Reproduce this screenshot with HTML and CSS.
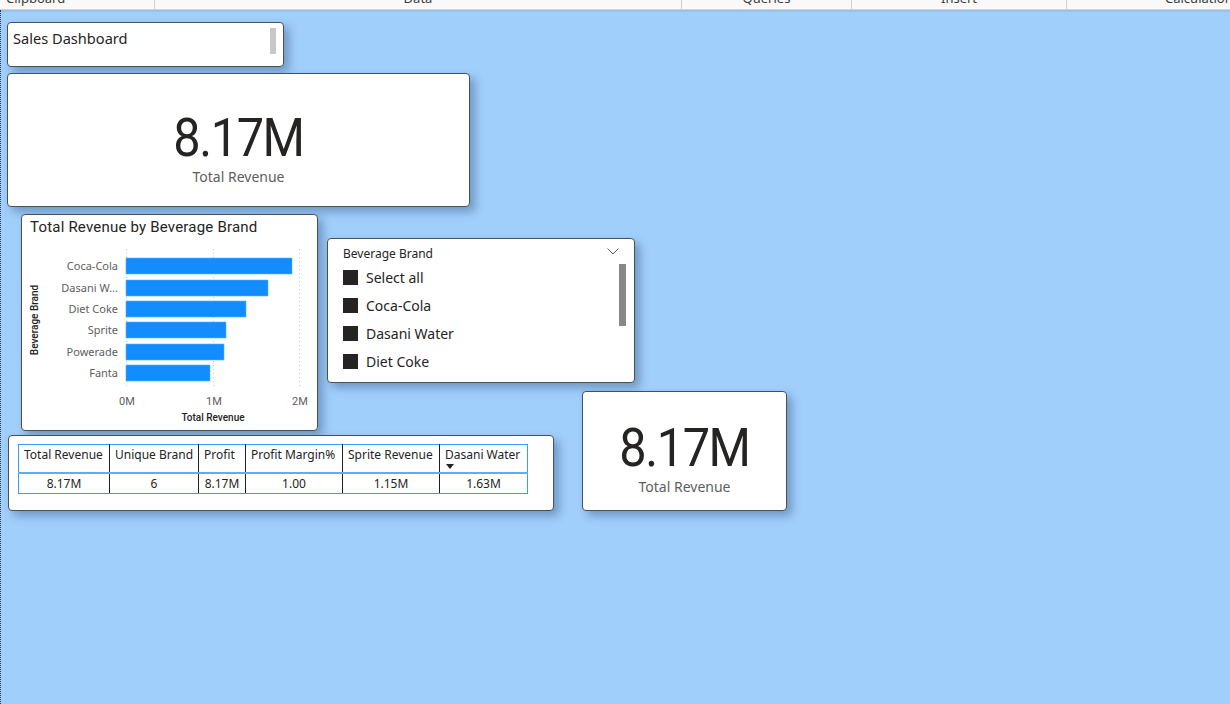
FILE: index.html
```html
<!DOCTYPE html>
<html>
<head>
<meta charset="utf-8">
<link rel="stylesheet" href="styles.css">
</head>
<body>
<div class="ribbon">
  <div class="group g-clip"><span>Clipboard</span></div>
  <div class="group g-data"><span>Data</span></div>
  <div class="group g-queries"><span>Queries</span></div>
  <div class="group g-insert"><span>Insert</span></div>
  <div class="group g-calc"><span>Calculations</span></div>
</div>
<div class="canvas">
  <div class="visual textbox">
    <div class="tb-text">Sales Dashboard</div>
    <div class="tb-scroll"></div>
  </div>

  <div class="visual card card-big">
    <div class="card-value">8.17M</div>
    <div class="card-label">Total Revenue</div>
  </div>

  <div class="visual chart">
    <div class="chart-title">Total Revenue by Beverage Brand</div>
    <svg class="chart-svg" width="294" height="193" viewBox="0 0 294 193">
      <g class="grid">
        <line x1="104.5" y1="12" x2="104.5" y2="150"/>
        <line x1="191.5" y1="12" x2="191.5" y2="150"/>
        <line x1="277.5" y1="12" x2="277.5" y2="150"/>
      </g>
      <g class="bars">
        <rect x="104" y="21" width="166" height="16"/>
        <rect x="104" y="43" width="142" height="16"/>
        <rect x="104" y="64" width="120" height="16"/>
        <rect x="104" y="85" width="100" height="16"/>
        <rect x="104" y="107" width="98" height="16"/>
        <rect x="104" y="128" width="84" height="16"/>
      </g>
      <g class="cat">
        <text x="96" y="33">Coca-Cola</text>
        <text x="96" y="55">Dasani W...</text>
        <text x="96" y="76">Diet Coke</text>
        <text x="96" y="97">Sprite</text>
        <text x="96" y="119">Powerade</text>
        <text x="96" y="140">Fanta</text>
      </g>
      <text class="axis-title" transform="translate(16 83) rotate(-90)">Beverage Brand</text>
      <g class="xlab">
        <text x="105" y="168">0M</text>
        <text x="192" y="168">1M</text>
        <text x="278" y="168">2M</text>
      </g>
      <text class="axis-title" x="191" y="184">Total Revenue</text>
    </svg>
  </div>

  <div class="visual slicer">
    <div class="sl-head">
      <span>Beverage Brand</span>
      <svg class="chev" width="12" height="7" viewBox="0 0 12 7"><polyline points="0.5,0.5 6,6 11.5,0.5"/></svg>
    </div>
    <div class="sl-item"><span class="box"></span><span>Select all</span></div>
    <div class="sl-item"><span class="box"></span><span>Coca-Cola</span></div>
    <div class="sl-item"><span class="box"></span><span>Dasani Water</span></div>
    <div class="sl-item"><span class="box"></span><span>Diet Coke</span></div>
    <div class="sl-scroll"></div>
  </div>

  <div class="visual tablevis">
    <table class="mtable">
      <colgroup>
        <col class="c1"><col class="c2"><col class="c3"><col class="c4"><col class="c5"><col class="c6">
      </colgroup>
      <thead>
        <tr>
          <th>Total Revenue</th>
          <th>Unique Brand</th>
          <th>Profit</th>
          <th>Profit Margin%</th>
          <th>Sprite Revenue</th>
          <th>Dasani Water<span class="sort"></span></th>
        </tr>
      </thead>
      <tbody>
        <tr>
          <td>8.17M</td>
          <td>6</td>
          <td>8.17M</td>
          <td>1.00</td>
          <td>1.15M</td>
          <td>1.63M</td>
        </tr>
      </tbody>
    </table>
  </div>

  <div class="visual card card-small">
    <div class="card-value">8.17M</div>
    <div class="card-label">Total Revenue</div>
  </div>
</div>
</body>
</html>
```

FILE: styles.css
```css
* { box-sizing: border-box; }
html, body { margin: 0; padding: 0; }
body {
  width: 1230px;
  height: 704px;
  overflow: hidden;
  font-family: "Noto Sans", "Open Sans", sans-serif;
  color: #252423;
  background: #a1cffc;
}

/* ribbon strip */
.ribbon {
  height: 10px;
  display: flex;
  background: #f9f9f9;
  border-bottom: 1px solid #d4d4d4;
  overflow: hidden;
  position: relative;
  z-index: 2;
  box-shadow: 0 1px 2px rgba(0,0,0,0.12);
}
.group {
  display: flex;
  justify-content: center;
  border-right: 1px solid #d0d0d0;
  height: 9px;
}
.group span {
  font-size: 13px;
  line-height: 16px;
  margin-top: -10px;
  color: #3b3b3b;
  white-space: nowrap;
}
.g-clip { width: 155px; justify-content: flex-start; padding-left: 6px; }
.g-data { width: 527px; }
.g-queries { width: 170px; }
.g-insert { width: 215px; }
.g-calc { width: 163px; border-right: none; justify-content: flex-start; padding-left: 98px; }

/* canvas */
.canvas {
  position: relative;
  height: 694px;
  background: #a1cffc;
  border-left: 1px dotted #3a3a3a;
}

.visual {
  position: absolute;
  background: #fff;
  border: 1px solid #4b4f54;
  border-radius: 4px;
  box-shadow: 5px 5px 10px rgba(10, 40, 80, 0.33);
}

/* text box */
.textbox { left: 6px; top: 12px; width: 277px; height: 45px; }
.tb-text {
  font-size: 14.6px;
  line-height: 20px;
  padding: 5px 0 0 5px;
  color: #252423;
}
.tb-scroll {
  position: absolute;
  left: 262px;
  top: 5px;
  width: 6px;
  height: 26px;
  background: #c8c8c8;
}

/* cards */
.card {
  display: flex;
  flex-direction: column;
  align-items: center;
  justify-content: center;
}
.card-big { left: 6px; top: 63px; width: 463px; height: 134px; padding-top: 21px; }
.card-small { left: 581px; top: 381px; width: 205px; height: 120px; padding-top: 19px; }
.card-value {
  font-family: Roboto, "DejaVu Sans", sans-serif;
  font-size: 54px;
  line-height: 48px;
  letter-spacing: -1.5px;
  color: #252423;
  transform: scaleX(0.9);
}
.card-label {
  margin-top: 5px;
  font-size: 14px;
  line-height: 20px;
  color: #605e5c;
}

/* bar chart */
.chart { left: 20px; top: 204px; width: 297px; height: 217px; }
.chart-title {
  font-family: Roboto, "DejaVu Sans", sans-serif;
  font-size: 15px;
  line-height: 20px;
  padding: 2px 0 0 8px;
  height: 22px;
  color: #252423;
  letter-spacing: 0.2px;
}
.chart-svg { display: block; }
.grid line { stroke: #c8c6c4; stroke-width: 1; stroke-dasharray: 1 3; }
.bars rect { fill: #118dff; stroke: #5aaeff; stroke-width: 0.6; }
.cat text {
  font-family: "Noto Sans", sans-serif;
  font-size: 11px;
  fill: #605e5c;
  text-anchor: end;
}
.xlab text {
  font-family: Roboto, sans-serif;
  font-size: 11px;
  fill: #605e5c;
  text-anchor: middle;
}
.axis-title {
  font-family: Roboto, sans-serif;
  font-size: 10px;
  font-weight: 500;
  fill: #252423;
  text-anchor: middle;
}

/* slicer */
.slicer { left: 326px; top: 228px; width: 308px; height: 145px; padding-top: 4px; }
.sl-head {
  height: 20px;
  display: flex;
  align-items: center;
  justify-content: space-between;
  padding: 0 15px 0 15px;
  font-size: 12px;
  color: #252423;
}
.chev { margin-top: -4px; }
.chev polyline { fill: none; stroke: #605e5c; stroke-width: 1; }
.sl-item {
  height: 28px;
  display: flex;
  align-items: center;
  gap: 8px;
  padding-left: 15px;
  font-size: 14px;
  color: #252423;
}
.box {
  width: 15px;
  height: 15px;
  background: #252423;
}
.sl-scroll {
  position: absolute;
  left: 290px;
  top: 24px;
  width: 9px;
  height: 64px;
  background: #8a8886;
  border: 1px solid #fff;
}

/* table */
.tablevis { left: 7px; top: 425px; width: 546px; height: 76px; padding: 8px 0 0 9px; }
.mtable {
  border-collapse: collapse;
  table-layout: fixed;
  width: 509px;
  font-size: 12px;
  color: #252423;
}
.c1 { width: 91px; } .c2 { width: 89px; } .c3 { width: 47px; }
.c4 { width: 97px; } .c5 { width: 97px; } .c6 { width: 88px; }
.mtable th, .mtable td {
  border-left: 1px solid #1f1f1f;
  border-right: 1px solid #1f1f1f;
  white-space: nowrap;
  overflow: hidden;
}
.mtable th:first-child, .mtable td:first-child { border-left: 1px solid #3b9bff; }
.mtable th:last-child, .mtable td:last-child { border-right: 1px solid #3b9bff; }
.mtable th {
  font-weight: normal;
  text-align: left;
  vertical-align: top;
  height: 28px;
  padding: 1px 4px 0 5px;
  line-height: 18px;
  border-top: 1px solid #3b9bff;
  border-bottom: 2px solid #5aaeff;
  position: relative;
}
.mtable td {
  text-align: center;
  height: 21px;
  padding: 1px 0 0;
  line-height: 18px;
  border-bottom: 1px solid #3b9bff;
}
.sort {
  position: absolute;
  left: 6px;
  top: 19px;
  width: 0;
  height: 0;
  border-left: 4px solid transparent;
  border-right: 4px solid transparent;
  border-top: 5px solid #252423;
}
```
